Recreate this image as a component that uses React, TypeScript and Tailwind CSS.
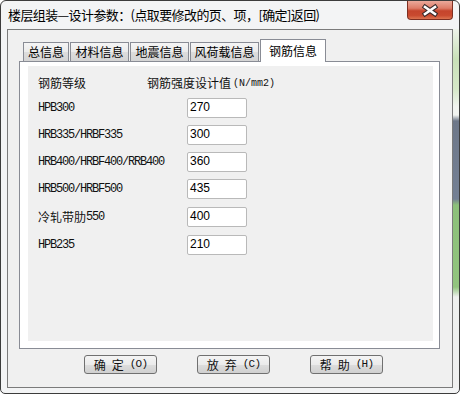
const cjk = "font-['Noto_Sans_CJK_SC','Microsoft_YaHei',sans-serif]";

const tabs = [
  { label: "总信息", w: "w-[46px]" },
  { label: "材料信息", w: "w-[59px]" },
  { label: "地震信息", w: "w-[59px]" },
  { label: "风荷载信息", w: "w-[69px]" },
];

const rows = [
  { name: "HPB300", value: "270" },
  { name: "HRB335/HRBF335", value: "300" },
  { name: "HRB400/HRBF400/RRB400", value: "360" },
  { name: "HRB500/HRBF500", value: "435" },
  { name: "冷轧带肋550", value: "400" },
  { name: "HPB235", value: "210" },
];

function Label({ text }: { text: string }) {
  // cjk part in song-like font, ascii in narrow mono
  const m = text.match(/^([^\x00-\x7f]*)(.*)$/);
  const han = m ? m[1] : "";
  const rest = m ? m[2] : text;
  return (
    <span className="w-[149px] shrink-0 flex items-center text-[#111]">
      {han && <span className={`${cjk} text-[12px]`}>{han}</span>}
      <span className="font-['Liberation_Mono',monospace] text-[12px] tracking-[-1.2px]">{rest}</span>
    </span>
  );
}

function Btn({ a, b, k }: { a: string; b: string; k: string }) {
  return (
    <button className={`w-[73px] h-[19px] rounded-[3px] border border-[#707070] bg-[linear-gradient(to_bottom,#f4f4f4_0%,#ebebeb_50%,#dddddd_51%,#d0d0d0_100%)] ${cjk} text-[12px] leading-none text-[#111] flex items-center justify-center gap-[6px]`}>
      <span>{a}</span>
      <span>{b}</span>
      <span className="font-['Liberation_Mono',monospace] text-[11px] tracking-[-0.8px]">({k})</span>
    </button>
  );
}

export default function App() {
  return (
    <div className="w-[460px] h-[395px] bg-white overflow-hidden">
      <div className="w-[460px] h-[394px] border border-[#3c3c3c] rounded-t-[6px] rounded-b-[5px] bg-[#f3f4f5] flex flex-col overflow-hidden">
        {/* title bar */}
        <div className="h-[28px] flex items-start shrink-0">
          <div className={`pl-[7px] pt-[5px] ${cjk} text-[13px] leading-[17px] tracking-[-0.6px] text-black whitespace-nowrap`}>
            楼层组装—设计参数：(点取要修改的页、项，[确定]返回)
          </div>
          <div className="ml-auto mr-[6px] w-[46px] h-[19px] rounded-b-[4px] border border-t-0 border-[#7d2f22] bg-[linear-gradient(to_bottom,#eba99b_0%,#de7c68_40%,#c5442c_55%,#c94a2f_80%,#dc7350_100%)] shrink-0">
            <svg width="44" height="18" viewBox="0 0 44 18">
              <path d="M17 6 L27 13 M27 6 L17 13" stroke="#3a2a2a" strokeWidth="4.6" strokeLinecap="square" />
              <path d="M17 6 L27 13 M27 6 L17 13" stroke="#ffffff" strokeWidth="2.6" strokeLinecap="square" />
            </svg>
          </div>
        </div>

        <div className="flex flex-1 min-h-0">
          <div className="w-[6px] shrink-0" />
          {/* client area */}
          <div className="flex-1 border border-[#7b7b7b] bg-[#f0f0f0] flex flex-col">
            <div className="ml-[11px] mr-[12px] mt-[9px] flex flex-col">
              {/* tabs */}
              <div className={`h-[22px] flex items-end gap-[1px] pl-[4px] ${cjk} text-[12px] text-black`}>
                {tabs.map((t) => (
                  <div
                    key={t.label}
                    className={`${t.w} h-[19px] border border-b-0 border-[#898c95] bg-[linear-gradient(to_bottom,#f5f5f5_0%,#ebebeb_50%,#dddddd_51%,#d4d4d4_100%)] flex items-center justify-center leading-none`}
                  >
                    {t.label}
                  </div>
                ))}
                <div className="w-[66px] h-[23px] -mb-[1px] relative z-10 border border-b-0 border-[#898c95] bg-white flex items-center justify-center leading-none pb-[1px]">
                  钢筋信息
                </div>
              </div>
              {/* panel */}
              <div className="h-[288px] border border-[#898c95] bg-white pl-[8px] pt-[4px] pr-[6px] pb-[7px] flex">
                <div className="flex-1 bg-[#f0f0f0] pl-[10px] pt-[7px] flex flex-col">
                  <div className="h-[20px] flex items-center text-[#111]">
                    <span className={`w-[109px] shrink-0 ${cjk} text-[12px]`}>钢筋等级</span>
                    <span className={`${cjk} text-[12px]`}>钢筋强度设计值</span>
                    <span className="ml-[2px] font-['Liberation_Mono',monospace] text-[10px]">(N/mm2)</span>
                  </div>
                  <div className="mt-[5px] flex flex-col gap-[7px]">
                    {rows.map((r, i) => (
                      <div key={r.name} className={`h-[20px] flex items-center ${i >= 4 ? "mt-[1px]" : ""}`}>
                        <Label text={r.name} />
                        <div className="w-[60px] h-[20px] border border-[#b9b9b9] rounded-[2px] bg-white pl-[2px] pt-[1px] font-['Liberation_Sans',sans-serif] text-[12px] leading-[14px] text-black">
                          {r.value}
                        </div>
                      </div>
                    ))}
                  </div>
                </div>
              </div>
            </div>
            {/* buttons */}
            <div className="mt-[6px] pl-[76px] flex gap-[40px]">
              <Btn a="确" b="定" k="O" />
              <Btn a="放" b="弃" k="C" />
              <Btn a="帮" b="助" k="H" />
            </div>
          </div>
          <div className="w-[6px] shrink-0 bg-[linear-gradient(to_bottom,#eef3ea_0px,#c9e0b8_30px,#d6e8c8_60px,#f2f4f0_78px,#f2f4f0_86px,#6e7889_92px,#748094_170px,#8cc07a_176px,#92c47e_258px,#eef0ee_268px,#f0f0f0_100%)]" />
        </div>
        <div className="h-[5px] shrink-0" />
      </div>
    </div>
  );
}
